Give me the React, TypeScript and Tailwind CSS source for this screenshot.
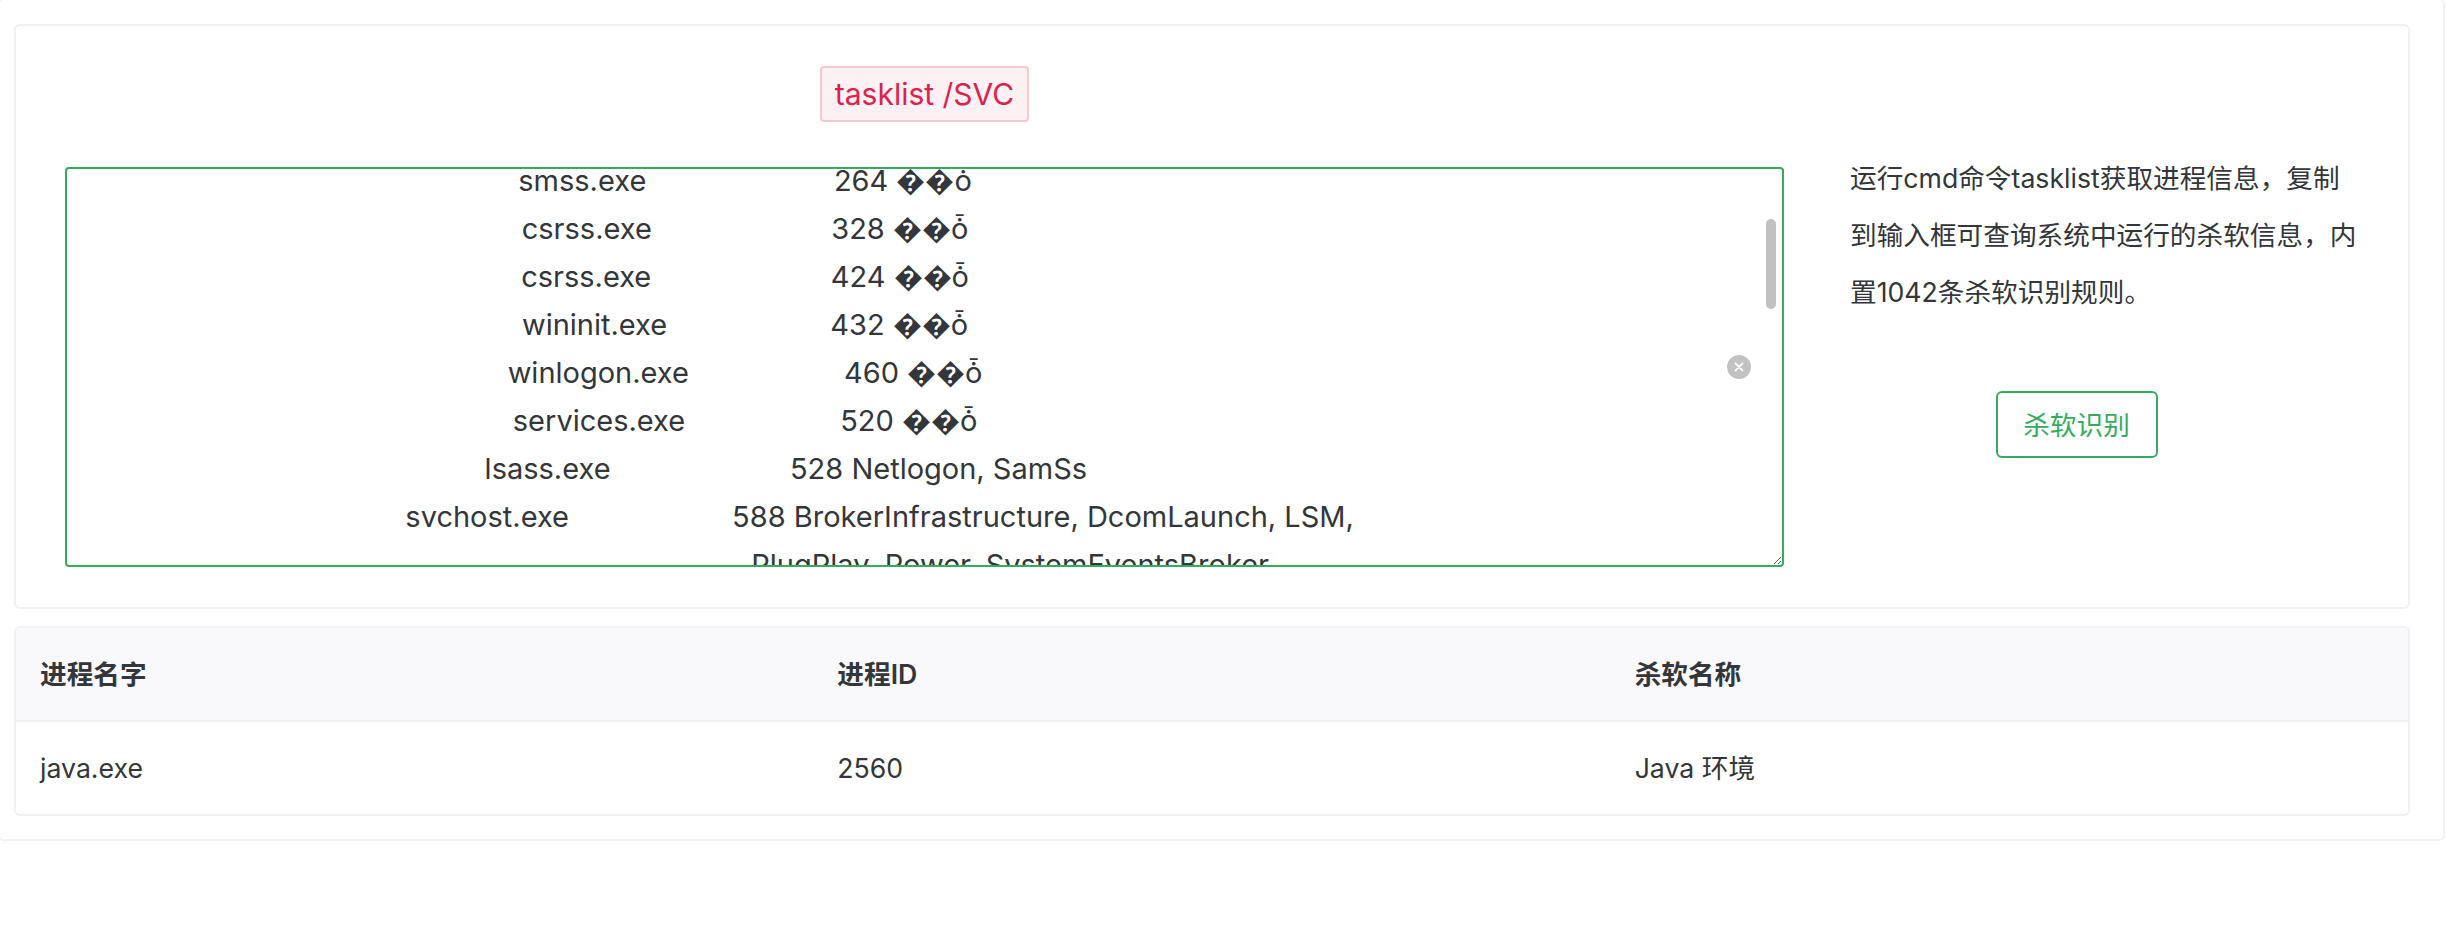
import React, { useEffect, useRef } from 'react';

const MISSING = '\uFFFD\uFFFD\u0231';

// tasklist columns: image name 25, pid 8, services 49
const row = (name: string, pid: string, services: string, len = services.length) =>
  name.padEnd(25) + ' ' + pid.padStart(8) + ' ' + services + ' '.repeat(Math.max(49 - len, 0));

const OUTPUT = [
  '',
  '\uFFFD\uFFFD\uFFFD\uFFFD                       PID \uFFFD\uFFFD\uFFFD\uFFFD',
  '========================= ======== =============================================',
  row('System Idle Process', '0', MISSING, 5),
  row('System', '4', MISSING, 5),
  row('smss.exe', '264', MISSING, 5),
  row('csrss.exe', '328', MISSING, 5),
  row('csrss.exe', '424', MISSING, 5),
  row('wininit.exe', '432', MISSING, 5),
  row('winlogon.exe', '460', MISSING, 5),
  row('services.exe', '520', MISSING, 5),
  row('lsass.exe', '528', 'Netlogon, SamSs'),
  row('svchost.exe', '588', 'BrokerInfrastructure, DcomLaunch, LSM,'),
  ' '.repeat(35) + 'PlugPlay, Power, SystemEventsBroker' + ' '.repeat(14),
  row('svchost.exe', '688', 'RpcEptMapper, RpcSs'),
  row('svchost.exe', '736', 'BFE, CoreMessagingRegistrar, DPS, MpsSvc'),
  row('svchost.exe', '808', 'Dhcp, EventLog, lmhosts, TimeBrokerSvc'),
  row('svchost.exe', '860', 'CertPropSvc, DsmSvc, gpsvc, iphlpsvc,'),
  ' '.repeat(35) + 'LanmanServer, ProfSvc, Schedule, SENS' + ' '.repeat(12),
  row('svchost.exe', '900', 'Dnscache, LanmanWorkstation, NlaSvc'),
  row('spoolsv.exe', '1208', 'Spooler'),
  row('java.exe', '2560', MISSING, 5),
  row('dwm.exe', '2712', MISSING, 5),
  row('explorer.exe', '2984', MISSING, 5),
  row('cmd.exe', '3120', MISSING, 5),
  row('conhost.exe', '3128', MISSING, 5),
  row('tasklist.exe', '3344', MISSING, 5),
].join('\n');

const ProcessInput: React.FC = () => {
  const ref = useRef<HTMLTextAreaElement>(null);

  useEffect(() => {
    if (ref.current) ref.current.scrollTop = 252;
  }, []);

  return (
    <div className="relative w-[1719px] h-[400px]">
      <textarea
        ref={ref}
        readOnly
        value={OUTPUT}
        className="block w-full h-full border-2 border-[#36ab60] rounded-[4px] outline-none text-center whitespace-break-spaces text-[29px] leading-[48px] text-[#33363a] overflow-y-scroll [scrollbar-width:none]"
      />
      <div className="absolute left-[1701px] top-[52px] w-[10px] h-[90px] rounded-full bg-[#c1c1c1]" />
      <button className="absolute left-[1662px] top-[188px] w-6 h-6 rounded-full bg-[#c2c2c2] flex items-center justify-center">
        <svg viewBox="0 0 12 12" className="w-3 h-3" fill="none" stroke="white" strokeWidth="1.8" strokeLinecap="round">
          <path d="M2.5 2.5l7 7M9.5 2.5l-7 7" />
        </svg>
      </button>
    </div>
  );
};

const App: React.FC = () => {
  return (
    <div className="min-h-[934px] bg-white font-['Inter','Noto_Sans_CJK_SC',sans-serif] text-[#33363a]">
      <div className="ml-[-2px] mt-[-2px] mr-[1px] border-2 border-[#f0f0f5] rounded-[6px] pt-[24px] pb-[23px] pl-[14px] pr-[33px]">
        <div className="border-2 border-[#f0f0f5] rounded-[6px] h-[585px] pl-[49px] flex">
          <div className="flex flex-col items-center w-[1719px]">
            <code className="mt-[40px] h-[56px] px-[13px] flex items-center border-2 border-[#f6c8d0] bg-[#fdf1f3] rounded-[4px] font-['Inter',sans-serif] text-[#d9224f] text-[30px]">
              tasklist /SVC
            </code>
            <div className="mt-[45px]">
              <ProcessInput />
            </div>
          </div>
          <div className="w-[585px] flex flex-col items-center">
            <p className="w-full mt-[124px] pl-[66px] text-[26.67px] leading-[57px]">
              运行cmd命令tasklist获取进程信息，复制
              <br />
              到输入框可查询系统中运行的杀软信息，内
              <br />
              置1042条杀软识别规则。
            </p>
            <button className="mt-[70px] w-[162px] h-[67px] border-2 border-[#36ab60] rounded-[6px] text-[#36ab60] text-[26.67px]">
              杀软识别
            </button>
          </div>
        </div>

        <div className="mt-[17px] border-2 border-[#f0f0f5] rounded-[6px] overflow-hidden">
          <div className="grid grid-cols-3 h-[94px] items-center bg-[#f9f9fb] border-b-2 border-[#f0f0f5] font-semibold text-[26.67px]">
            <div className="pl-[24px]">进程名字</div>
            <div className="pl-[24px]">进程ID</div>
            <div className="pl-[24px]">杀软名称</div>
          </div>
          <div className="grid grid-cols-3 h-[92px] items-center text-[26.67px]">
            <div className="pl-[24px]">java.exe</div>
            <div className="pl-[24px]">2560</div>
            <div className="pl-[24px]">Java 环境</div>
          </div>
        </div>
      </div>
    </div>
  );
};

export default App;
